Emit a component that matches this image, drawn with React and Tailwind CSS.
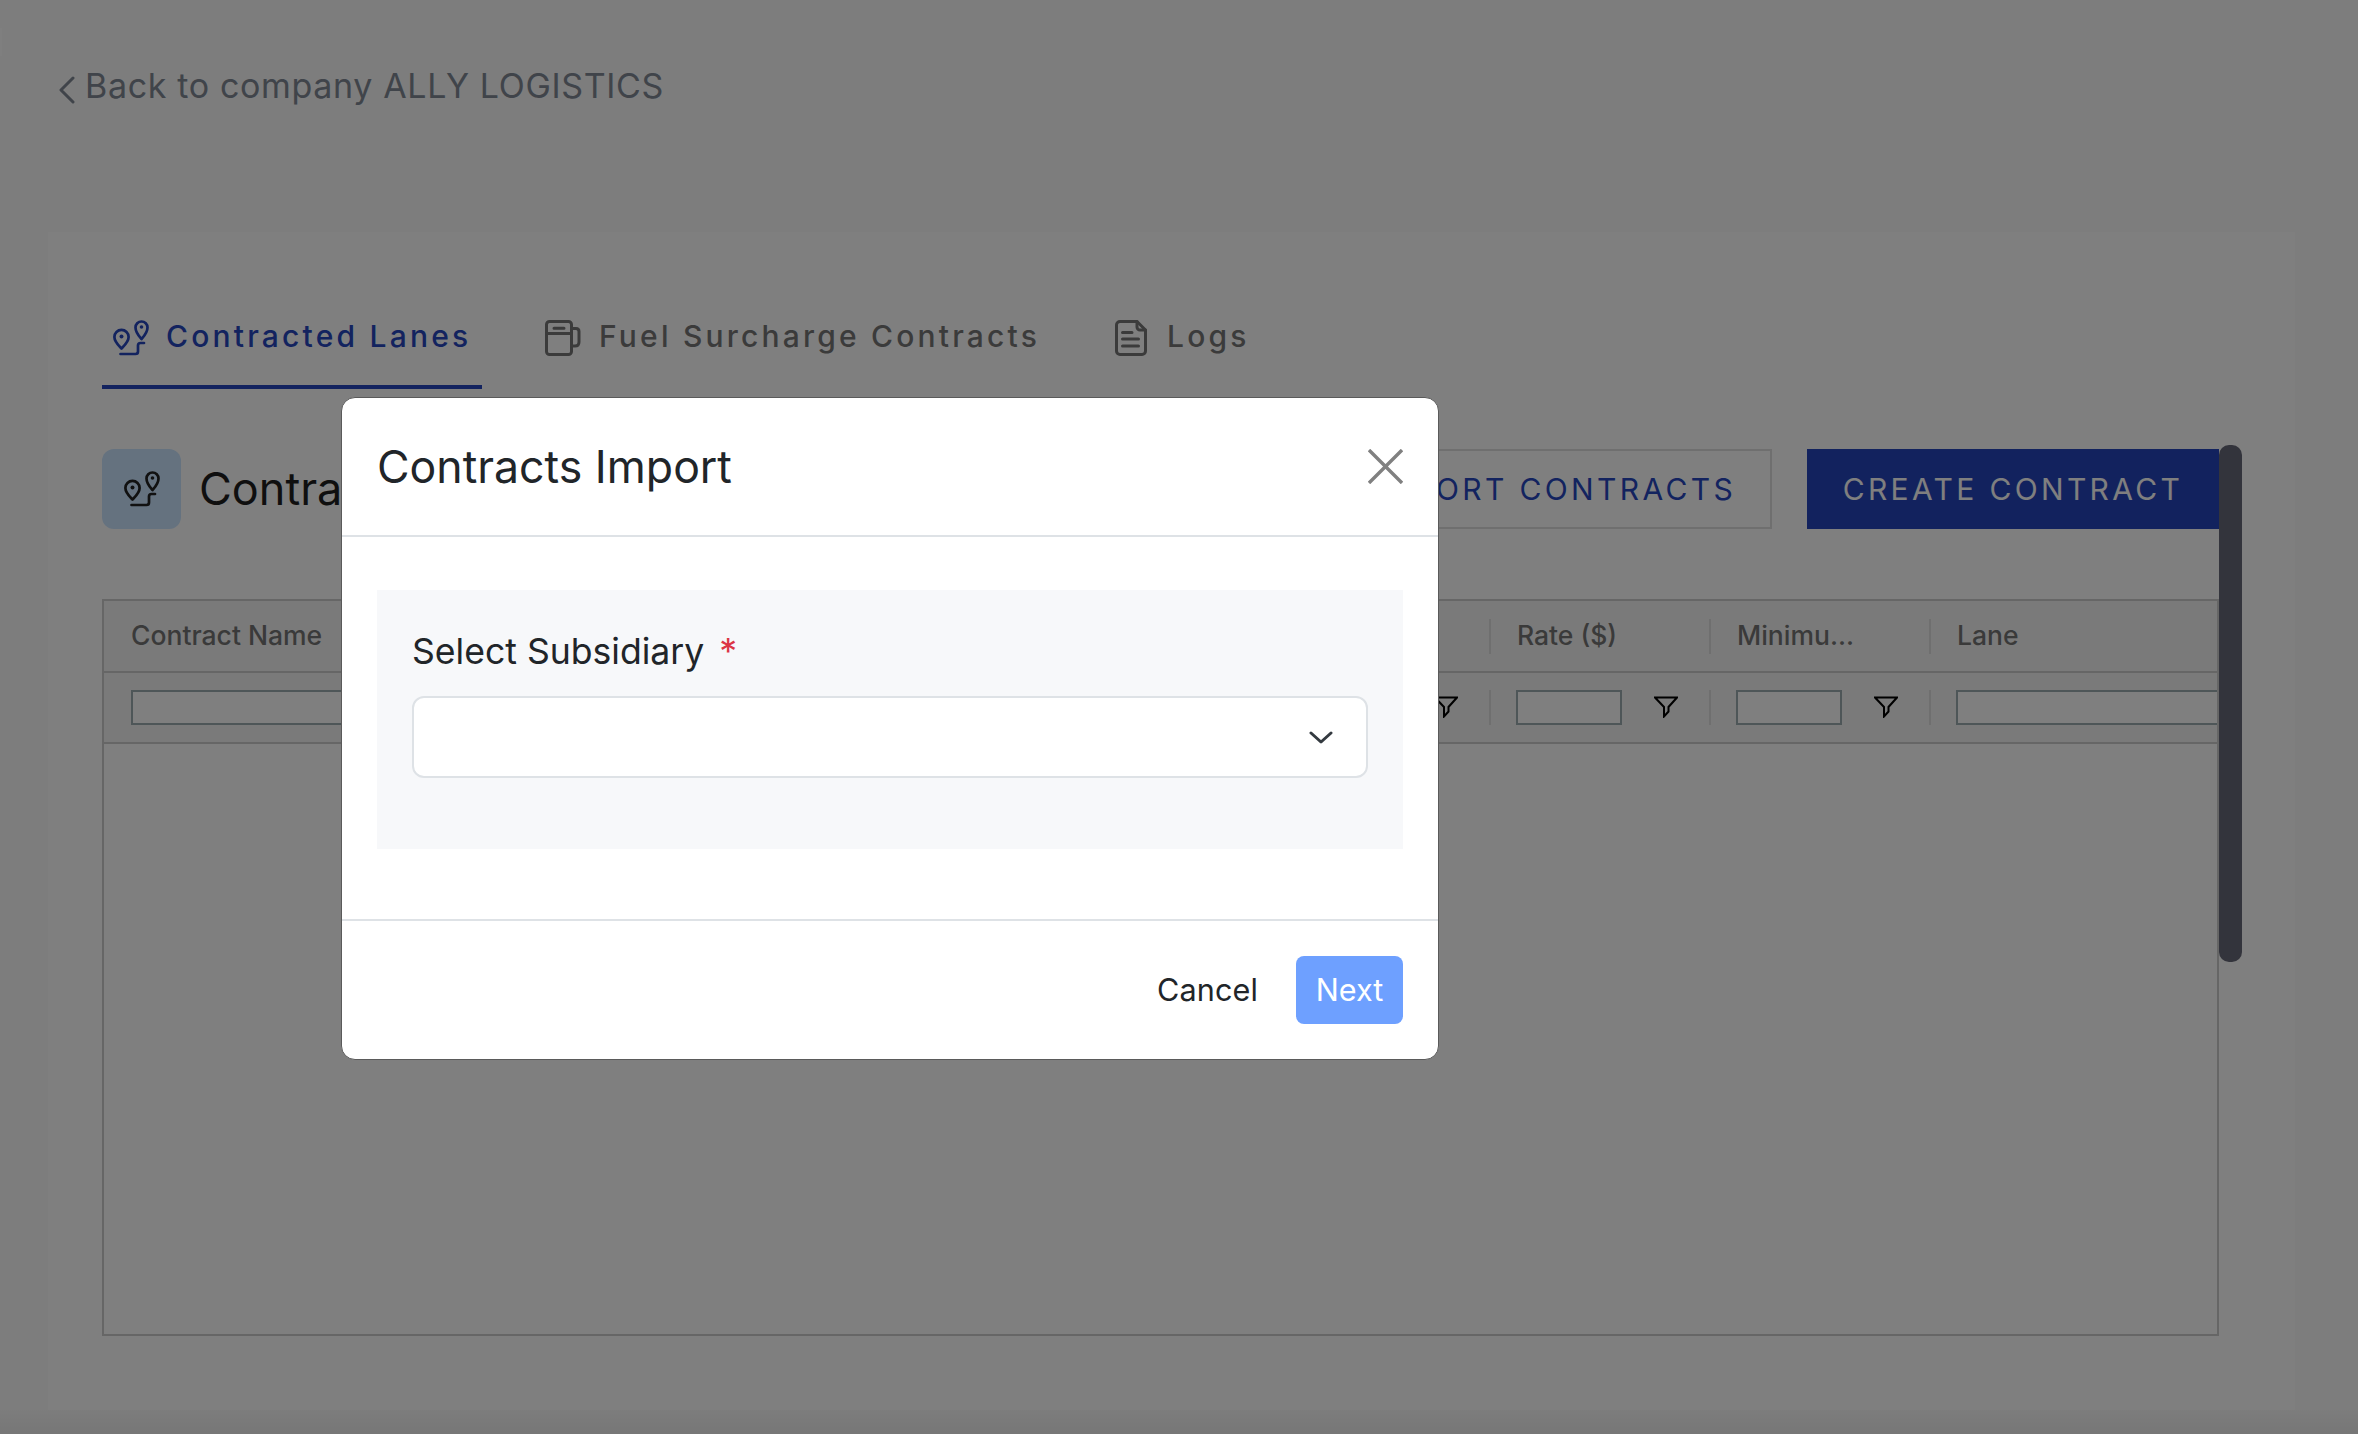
import React from "react";

const font = { fontFamily: "Inter, 'Noto Sans', sans-serif" };

function RouteIcon({ className }) {
  return (
    <svg viewBox="0 0 36 36" fill="none" stroke="currentColor" strokeWidth="2.7" strokeLinecap="round" strokeLinejoin="round" className={className}>
      <path d="M8.5 28.5C5 25 1.4 21.8 1.4 17a7.1 7.1 0 0 1 14.2 0C15.6 21.8 12 25 8.5 28.5Z" />
      <circle cx="8.5" cy="16.5" r="2" fill="currentColor" stroke="none" />
      <path d="M28.5 19C25.5 15.5 22.5 12.5 22.5 7.5a6 6 0 0 1 12 0C34.5 12.5 31.5 15.5 28.5 19Z" />
      <circle cx="28.5" cy="7" r="1.8" fill="currentColor" stroke="none" />
      <path d="M31 23H27.5Q25 23 25 25.5V31.5Q25 34 22.5 34H7.5" />
    </svg>
  );
}

function FuelIcon({ className }) {
  return (
    <svg viewBox="0 0 36 36" fill="none" stroke="currentColor" strokeWidth="3" strokeLinecap="round" strokeLinejoin="round" className={className}>
      <rect x="1.5" y="1.5" width="25" height="33" rx="3" />
      <path d="M1.5 13.5H26.5M9 8.3H19" />
      <path d="M27 8.5H31Q34 8.5 34 11.5V22Q34 26 30 26H27" />
    </svg>
  );
}

function DocIcon({ className }) {
  return (
    <svg viewBox="0 0 32 36" fill="none" stroke="currentColor" strokeWidth="3" strokeLinecap="round" strokeLinejoin="round" className={className}>
      <path d="M5 1.5H22L30.5 10V31A3.5 3.5 0 0 1 27 34.5H5A3.5 3.5 0 0 1 1.5 31V5A3.5 3.5 0 0 1 5 1.5Z" />
      <path d="M22 1.5V7A3 3 0 0 0 25 10H30.5" />
      <path d="M7.5 12.5H17M7.5 19H23.5M7.5 26H23.5" />
    </svg>
  );
}

function FilterIcon() {
  return (
    <svg viewBox="0 0 24 22" fill="none" stroke="#000" strokeWidth="2" strokeLinejoin="miter" className="w-[24px] h-[22px] shrink-0 mb-[2px]">
      <path d="M1 1.5H23L14.5 11V15.5L10 20.5V11Z" />
    </svg>
  );
}

function Sep() {
  return <div className="w-[2px] h-[35px] bg-[#dedede] shrink-0" />;
}

function HeadCell({ label }) {
  return (
    <div className="w-[220px] shrink-0 flex items-center">
      <Sep />
      <span className="pl-[26px] text-[26.5px] font-medium text-[#757575]">{label}</span>
    </div>
  );
}

function FilterCell() {
  return (
    <div className="w-[220px] shrink-0 flex items-center">
      <Sep />
      <div className="ml-[25px] w-[106px] h-[35px] border-2 border-[#9cacb0] bg-white shrink-0" />
      <div className="ml-[32px] flex"><FilterIcon /></div>
    </div>
  );
}

export default function App() {
  return (
    <div style={font} className="relative w-full h-[1434px] overflow-hidden bg-[#fafafa] flex flex-col">
      <div className="absolute left-0 top-[28px] w-[2px] h-[28px] bg-[#ffffff]" />

      <div className="h-[232px] shrink-0 pl-[59px] pt-[65px]">
        <div className="flex items-center h-[40px] text-[#808894]">
          <svg viewBox="0 0 16 28" fill="none" stroke="currentColor" strokeWidth="3" strokeLinecap="round" strokeLinejoin="round" className="w-[16px] h-[28px] mt-[9px]">
            <path d="M14 2L2 14L14 26" />
          </svg>
          <span className="ml-[10px] text-[34px] tracking-[0.65px]">Back to company ALLY LOGISTICS</span>
        </div>
      </div>

      <div className="ml-[48px] w-[2247px] h-[1178px] bg-white pl-[54px] pr-[76px] pt-[70px] shrink-0">
        <div className="flex h-[87px]">
          <div className="w-[380px] h-[87px] border-b-4 border-[#2646be] flex pt-[18px] pl-[11px] text-[#2646be]">
            <RouteIcon className="w-[36px] h-[36px]" />
            <span className="ml-[17px] text-[30px] leading-[33px] font-[450] tracking-[3.2px]">Contracted Lanes</span>
          </div>
          <div className="ml-[63px] flex pt-[18px] text-[#767676]">
            <FuelIcon className="w-[36px] h-[36px]" />
            <span className="ml-[18px] text-[30px] leading-[33px] font-[450] tracking-[3.2px]">Fuel Surcharge Contracts</span>
          </div>
          <div className="ml-[75px] flex pt-[18px] text-[#767676]">
            <DocIcon className="w-[32px] h-[36px]" />
            <span className="ml-[20px] text-[30px] leading-[33px] font-[450] tracking-[3.2px]">Logs</span>
          </div>
        </div>

        <div className="mt-[60px] h-[80px] flex items-center justify-between">
          <div className="flex items-center">
            <div className="w-[79px] h-[80px] rounded-[12px] bg-[#cae4ff] flex items-center justify-center text-[#222]">
              <RouteIcon className="w-[36px] h-[36px]" />
            </div>
            <span className="ml-[18px] text-[45px] text-[#1e1e1e]">Contracts</span>
          </div>
          <div className="flex items-center gap-[35px]">
            <button className="h-[80px] px-[34px] border-2 border-[#dedede] text-[30px] tracking-[3.35px] text-[#2646be]">IMPORT CONTRACTS</button>
            <button className="h-[80px] w-[412px] bg-[#2444bc] text-[30px] tracking-[3.35px] text-white">CREATE CONTRACT</button>
          </div>
        </div>

        <div className="mt-[70px] h-[737px] border-2 border-[#cccccc] overflow-hidden">
          <div className="h-[72px] bg-[#f4f4f4] border-b-2 border-[#cccccc] flex items-center">
            <div className="w-[1165px] shrink-0 pl-[27px] text-[26.5px] font-medium text-[#757575]">Contract Name</div>
            <div className="w-[220px] shrink-0 flex items-center"><Sep /></div>
            <HeadCell label="Rate ($)" />
            <HeadCell label="Minimu..." />
            <HeadCell label="Lane" />
          </div>
          <div className="h-[71px] bg-[#f4f4f4] border-b-2 border-[#cccccc] flex items-center">
            <div className="w-[1165px] shrink-0 pl-[27px]">
              <div className="w-[300px] h-[35px] border-2 border-[#9cacb0] bg-white" />
            </div>
            <div className="w-[220px] shrink-0 flex items-center">
              <Sep />
              <div className="ml-[163px] flex"><FilterIcon /></div>
            </div>
            <FilterCell />
            <FilterCell />
            <div className="flex-1 flex items-center">
              <Sep />
              <div className="ml-[25px] flex-1 h-[35px] border-2 border-r-0 border-[#9cacb0] bg-white" />
            </div>
          </div>
        </div>
      </div>

      <div className="flex-1 bg-gradient-to-b from-[#fafafa] to-[#eeeeee]" />

      <div className="absolute inset-0 bg-black/50" />

      <div className="absolute left-[2219px] top-[445px] w-[23px] h-[517px] rounded-[10px] bg-[#33343c]" />

      <div className="absolute left-[341px] top-[397px] w-[1098px] h-[663px] bg-white border border-[#5a5a5a] rounded-[14px] overflow-hidden flex flex-col">
        <div className="h-[139px] shrink-0 border-b-2 border-[#dee2e6] flex items-center justify-between pl-[35px] pr-[35px]">
          <span className="text-[44.6px] text-[#212529] pt-[2px]">Contracts Import</span>
          <svg viewBox="0 0 35 35" fill="none" stroke="#808080" strokeWidth="3.4" className="w-[35px] h-[35px]">
            <path d="M1 1L34 34M34 1L1 34" />
          </svg>
        </div>
        <div className="h-[384px] shrink-0 border-b-2 border-[#dee2e6] pt-[53px] px-[35px]">
          <div className="h-[259px] bg-[#f7f8fa] px-[35px] pt-[38px]">
            <div className="flex items-start h-[48px] leading-[48px]">
              <span className="text-[35.6px] text-[#212529]">Select Subsidiary</span>
              <span className="ml-[15px] text-[35.6px] text-[#dc3545]">*</span>
            </div>
            <div className="mt-[20px] h-[82px] bg-white border-2 border-[#dee2e6] rounded-[12px] flex items-center justify-end pr-[33px]">
              <svg viewBox="0 0 24 13" fill="none" stroke="#343a40" strokeWidth="3" strokeLinecap="round" strokeLinejoin="round" className="w-[24px] h-[13px]">
                <path d="M2 2L12 11L22 2" />
              </svg>
            </div>
          </div>
        </div>
        <div className="flex-1 flex items-center justify-end pr-[35px]">
          <button className="text-[30.6px] tracking-[0.1px] text-[#212529]">Cancel</button>
          <button className="ml-[38px] w-[107px] h-[68px] rounded-[8px] bg-[#6ea0ff] text-[30.6px] text-white">Next</button>
        </div>
      </div>
    </div>
  );
}
